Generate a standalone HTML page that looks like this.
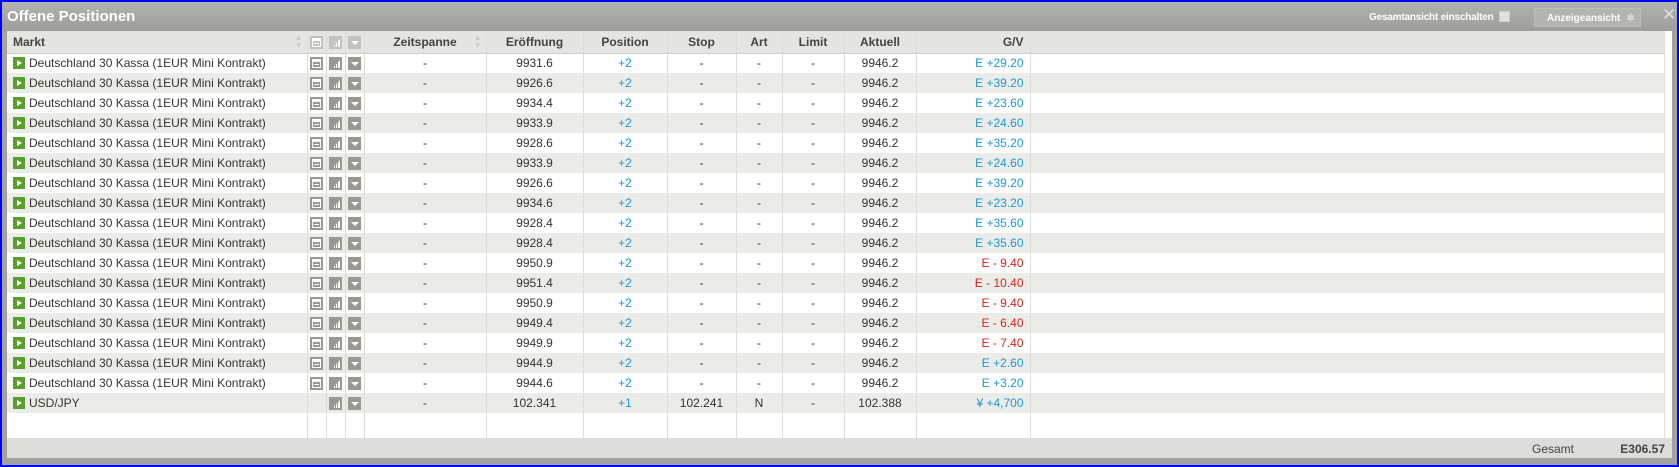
<!DOCTYPE html><html><head><style>
*{margin:0;padding:0;box-sizing:border-box}
body{width:1679px;height:467px;background:#0000ff;font-family:"Liberation Sans",Arial,sans-serif;overflow:hidden;position:relative}
#win{position:absolute;left:2px;top:2px;width:1675px;height:463px;background:#a2a29f}
#tb{position:absolute;left:0;top:0;width:1675px;height:29px;background:linear-gradient(#b2b2b0,#9d9d9b)}
#title{position:absolute;left:5px;top:6px;color:#fff;font-weight:bold;font-size:15px}
#gs{position:absolute;left:1367px;top:10px;color:#fff;font-weight:bold;font-size:10px;letter-spacing:-0.2px}
#cb{position:absolute;left:1497px;top:9px;width:11px;height:11px;background:#e0e0de;border:1px solid #ccc}
#btn{position:absolute;left:1532px;top:6px;width:107px;height:19px;background:#b3b3b1;border:1px solid #bdbdbb;color:#fff;font-weight:bold;font-size:10px;padding:4px 0 0 12px}
#btn span{color:#ddd;margin-left:6px}
#x{position:absolute;left:1660px;top:3px;color:#ddd;font-size:17px}
#tbl{position:absolute;left:5px;top:29px;width:1665px;height:407px;background:#fff;overflow:hidden}
table{border-collapse:collapse;table-layout:fixed;font-size:12px;color:#333}
td,th{height:20px;border-right:1px solid #ddddd9;white-space:nowrap;overflow:hidden;text-align:center;padding:0}
th{height:22px;background:#e4e4e0;font-weight:bold;color:#444;border-bottom:1px solid #cfcfcb;position:relative}
tr:nth-child(odd) td{background:#ebebe7}
tr.blank td{background:#fff!important}
.l{text-align:left;padding-left:6px}
.r{text-align:right;padding-right:6px}
.b{color:#1a9ad6}.rd{color:#e0201a}
.g{display:inline-block;width:12px;height:12px;background:#5a9e2e;vertical-align:-2px;margin-right:4px;position:relative}
.g:after{content:"";position:absolute;left:4px;top:3px;border-left:5px solid #fff;border-top:3px solid transparent;border-bottom:3px solid transparent}
.ic{display:inline-block;width:13px;height:13px;background:#9c9890;vertical-align:middle;position:relative}
.ic.h{background:#c4c2bc}
.i1:after{content:"";position:absolute;left:2px;top:2px;width:9px;height:9px;box-sizing:border-box;border:1px solid #fff;border-top-width:3px;background:linear-gradient(#fff,#fff) 1px 2px/5px 1px no-repeat}
.i3:after{content:"";position:absolute;left:3px;top:5px;border-top:4px solid #fff;border-left:4px solid transparent;border-right:4px solid transparent}
.i2:after{content:"";position:absolute;left:3px;top:3px;width:8px;height:8px;background:linear-gradient(to right,transparent 0,transparent 2px,#fff 2px,#fff 3px,transparent 3px,transparent 4px,#fff 4px,#fff 5px,transparent 5px,transparent 6px,#fff 6px);clip-path:polygon(0 100%,100% 0,100% 100%)}
.sort{color:#c8c8c4;font-size:8px;position:absolute;right:4px;top:3px;line-height:8px}
#foot{position:absolute;left:5px;top:436px;width:1665px;height:20px;background:#dcdcd8;font-size:12px;color:#444}
</style></head><body><div id="win">
<div id="tb"><div id="title">Offene Positionen</div><div id="gs">Gesamtansicht einschalten</div><div id="cb"></div><div id="btn">Anzeigeansicht<span>✲</span></div><div id="x">✕</div></div>
<div id="tbl"><table>
<colgroup><col style="width:300px"><col style="width:19px"><col style="width:19px"><col style="width:19px"><col style="width:122px"><col style="width:97px"><col style="width:84px"><col style="width:69px"><col style="width:46px"><col style="width:62px"><col style="width:72px"><col style="width:114px"><col style="width:634px"></colgroup>
<tr><th class="l">Markt<span class="sort">▲<br>▼</span></th><th><span class="ic h i1"></span></th><th><span class="ic h i2"></span></th><th><span class="ic h i3"></span></th><th>Zeitspanne<span class="sort">▲<br>▼</span></th><th>Eröffnung</th><th>Position</th><th>Stop</th><th>Art</th><th>Limit</th><th>Aktuell</th><th class="r">G/V</th><th></th></tr>
<tr><td class="l"><span class="g"></span>Deutschland 30 Kassa (1EUR Mini Kontrakt)</td><td><span class="ic i1"></span></td><td><span class="ic i2"></span></td><td><span class="ic i3"></span></td><td>-</td><td>9931.6</td><td class="b">+2</td><td>-</td><td>-</td><td>-</td><td>9946.2</td><td class="r b">E +29.20</td><td></td></tr>
<tr><td class="l"><span class="g"></span>Deutschland 30 Kassa (1EUR Mini Kontrakt)</td><td><span class="ic i1"></span></td><td><span class="ic i2"></span></td><td><span class="ic i3"></span></td><td>-</td><td>9926.6</td><td class="b">+2</td><td>-</td><td>-</td><td>-</td><td>9946.2</td><td class="r b">E +39.20</td><td></td></tr>
<tr><td class="l"><span class="g"></span>Deutschland 30 Kassa (1EUR Mini Kontrakt)</td><td><span class="ic i1"></span></td><td><span class="ic i2"></span></td><td><span class="ic i3"></span></td><td>-</td><td>9934.4</td><td class="b">+2</td><td>-</td><td>-</td><td>-</td><td>9946.2</td><td class="r b">E +23.60</td><td></td></tr>
<tr><td class="l"><span class="g"></span>Deutschland 30 Kassa (1EUR Mini Kontrakt)</td><td><span class="ic i1"></span></td><td><span class="ic i2"></span></td><td><span class="ic i3"></span></td><td>-</td><td>9933.9</td><td class="b">+2</td><td>-</td><td>-</td><td>-</td><td>9946.2</td><td class="r b">E +24.60</td><td></td></tr>
<tr><td class="l"><span class="g"></span>Deutschland 30 Kassa (1EUR Mini Kontrakt)</td><td><span class="ic i1"></span></td><td><span class="ic i2"></span></td><td><span class="ic i3"></span></td><td>-</td><td>9928.6</td><td class="b">+2</td><td>-</td><td>-</td><td>-</td><td>9946.2</td><td class="r b">E +35.20</td><td></td></tr>
<tr><td class="l"><span class="g"></span>Deutschland 30 Kassa (1EUR Mini Kontrakt)</td><td><span class="ic i1"></span></td><td><span class="ic i2"></span></td><td><span class="ic i3"></span></td><td>-</td><td>9933.9</td><td class="b">+2</td><td>-</td><td>-</td><td>-</td><td>9946.2</td><td class="r b">E +24.60</td><td></td></tr>
<tr><td class="l"><span class="g"></span>Deutschland 30 Kassa (1EUR Mini Kontrakt)</td><td><span class="ic i1"></span></td><td><span class="ic i2"></span></td><td><span class="ic i3"></span></td><td>-</td><td>9926.6</td><td class="b">+2</td><td>-</td><td>-</td><td>-</td><td>9946.2</td><td class="r b">E +39.20</td><td></td></tr>
<tr><td class="l"><span class="g"></span>Deutschland 30 Kassa (1EUR Mini Kontrakt)</td><td><span class="ic i1"></span></td><td><span class="ic i2"></span></td><td><span class="ic i3"></span></td><td>-</td><td>9934.6</td><td class="b">+2</td><td>-</td><td>-</td><td>-</td><td>9946.2</td><td class="r b">E +23.20</td><td></td></tr>
<tr><td class="l"><span class="g"></span>Deutschland 30 Kassa (1EUR Mini Kontrakt)</td><td><span class="ic i1"></span></td><td><span class="ic i2"></span></td><td><span class="ic i3"></span></td><td>-</td><td>9928.4</td><td class="b">+2</td><td>-</td><td>-</td><td>-</td><td>9946.2</td><td class="r b">E +35.60</td><td></td></tr>
<tr><td class="l"><span class="g"></span>Deutschland 30 Kassa (1EUR Mini Kontrakt)</td><td><span class="ic i1"></span></td><td><span class="ic i2"></span></td><td><span class="ic i3"></span></td><td>-</td><td>9928.4</td><td class="b">+2</td><td>-</td><td>-</td><td>-</td><td>9946.2</td><td class="r b">E +35.60</td><td></td></tr>
<tr><td class="l"><span class="g"></span>Deutschland 30 Kassa (1EUR Mini Kontrakt)</td><td><span class="ic i1"></span></td><td><span class="ic i2"></span></td><td><span class="ic i3"></span></td><td>-</td><td>9950.9</td><td class="b">+2</td><td>-</td><td>-</td><td>-</td><td>9946.2</td><td class="r rd">E - 9.40</td><td></td></tr>
<tr><td class="l"><span class="g"></span>Deutschland 30 Kassa (1EUR Mini Kontrakt)</td><td><span class="ic i1"></span></td><td><span class="ic i2"></span></td><td><span class="ic i3"></span></td><td>-</td><td>9951.4</td><td class="b">+2</td><td>-</td><td>-</td><td>-</td><td>9946.2</td><td class="r rd">E - 10.40</td><td></td></tr>
<tr><td class="l"><span class="g"></span>Deutschland 30 Kassa (1EUR Mini Kontrakt)</td><td><span class="ic i1"></span></td><td><span class="ic i2"></span></td><td><span class="ic i3"></span></td><td>-</td><td>9950.9</td><td class="b">+2</td><td>-</td><td>-</td><td>-</td><td>9946.2</td><td class="r rd">E - 9.40</td><td></td></tr>
<tr><td class="l"><span class="g"></span>Deutschland 30 Kassa (1EUR Mini Kontrakt)</td><td><span class="ic i1"></span></td><td><span class="ic i2"></span></td><td><span class="ic i3"></span></td><td>-</td><td>9949.4</td><td class="b">+2</td><td>-</td><td>-</td><td>-</td><td>9946.2</td><td class="r rd">E - 6.40</td><td></td></tr>
<tr><td class="l"><span class="g"></span>Deutschland 30 Kassa (1EUR Mini Kontrakt)</td><td><span class="ic i1"></span></td><td><span class="ic i2"></span></td><td><span class="ic i3"></span></td><td>-</td><td>9949.9</td><td class="b">+2</td><td>-</td><td>-</td><td>-</td><td>9946.2</td><td class="r rd">E - 7.40</td><td></td></tr>
<tr><td class="l"><span class="g"></span>Deutschland 30 Kassa (1EUR Mini Kontrakt)</td><td><span class="ic i1"></span></td><td><span class="ic i2"></span></td><td><span class="ic i3"></span></td><td>-</td><td>9944.9</td><td class="b">+2</td><td>-</td><td>-</td><td>-</td><td>9946.2</td><td class="r b">E +2.60</td><td></td></tr>
<tr><td class="l"><span class="g"></span>Deutschland 30 Kassa (1EUR Mini Kontrakt)</td><td><span class="ic i1"></span></td><td><span class="ic i2"></span></td><td><span class="ic i3"></span></td><td>-</td><td>9944.6</td><td class="b">+2</td><td>-</td><td>-</td><td>-</td><td>9946.2</td><td class="r b">E +3.20</td><td></td></tr>
<tr><td class="l"><span class="g"></span>USD/JPY</td><td></td><td><span class="ic i2"></span></td><td><span class="ic i3"></span></td><td>-</td><td>102.341</td><td class="b">+1</td><td>102.241</td><td>N</td><td>-</td><td>102.388</td><td class="r b">¥ +4,700</td><td></td></tr>
<tr class="blank"><td style="height:40px"></td><td></td><td></td><td></td><td></td><td></td><td></td><td></td><td></td><td></td><td></td><td></td><td></td></tr>
</table></div>
<div id="foot"><span style="position:absolute;left:1525px;top:4px">Gesamt</span><span style="position:absolute;right:7px;top:4px;font-weight:bold;font-size:12px">E306.57</span></div>
</div></body></html>
